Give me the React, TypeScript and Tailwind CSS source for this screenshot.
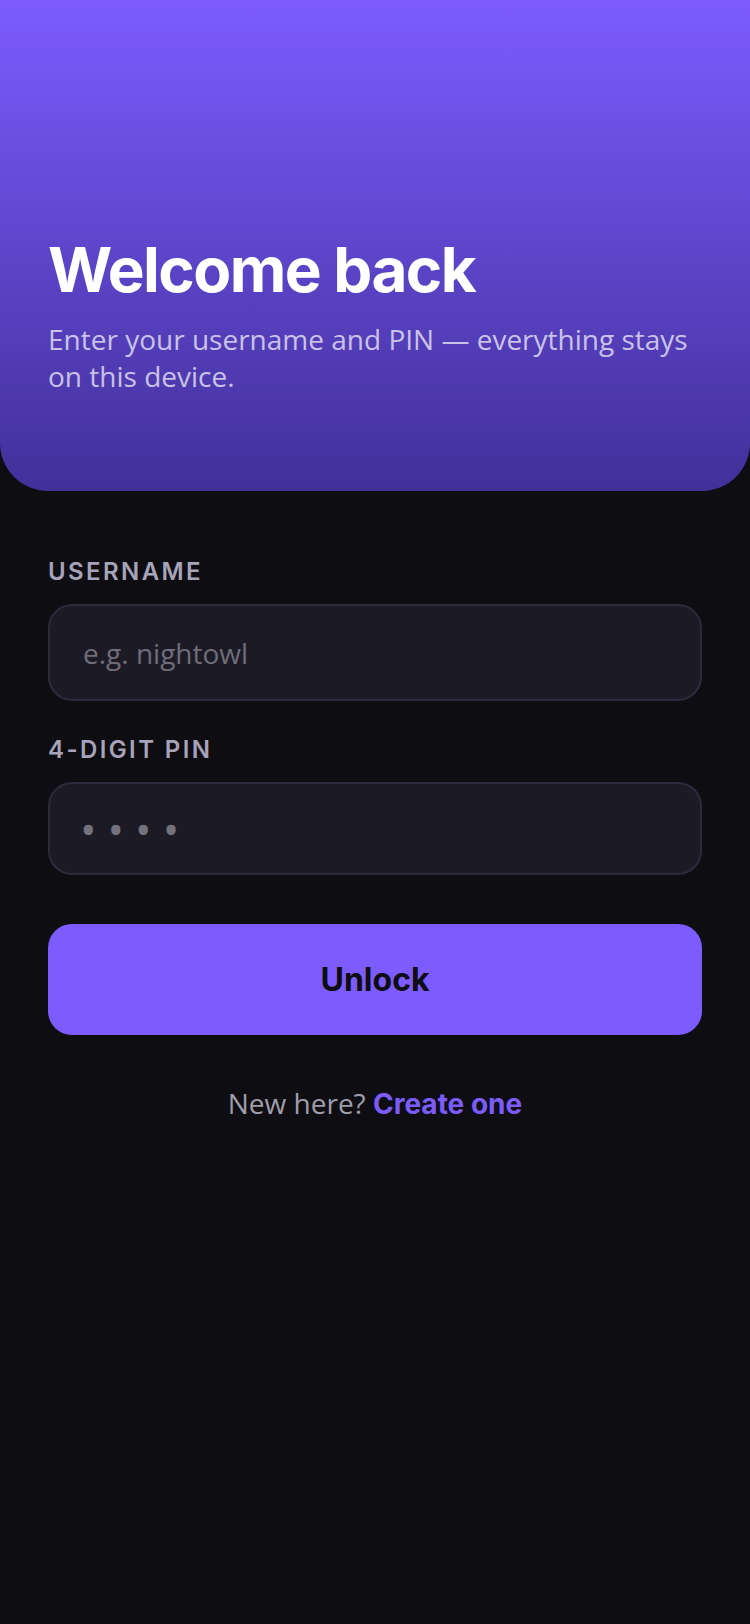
import { useState } from "react";

const sans = "font-['Inter','Noto_Sans',sans-serif]";
const body = "font-['Open_Sans','Noto_Sans',sans-serif]";

function Field({
  label,
  children,
}: {
  label: string;
  children: React.ReactNode;
}) {
  return (
    <label className="flex flex-col gap-[14px]">
      <span className={`${sans} text-[24px] leading-[36px] font-semibold tracking-[0.1em] text-[#a7a3b8] uppercase`}>
        {label}
      </span>
      {children}
    </label>
  );
}

export default function App() {
  const [username, setUsername] = useState("");
  const [pin, setPin] = useState("");

  return (
    <div className="min-h-[1624px] w-full bg-[#0e0d12] flex flex-col">
      <header className="h-[491px] flex flex-col justify-end px-12 pb-[96px] rounded-b-[48px] bg-gradient-to-b from-[#7c5cff] to-[#42309a]">
        <h1 className={`${sans} text-[62px] leading-[1.1] font-bold tracking-tight text-white`}>Welcome back</h1>
        <p className={`${body} mt-[17px] text-[28px] leading-[37px] text-white/70`}>
          Enter your username and PIN — everything stays on this device.
        </p>
      </header>

      <main className="flex flex-col px-12 pt-[63px]">
        <div className="flex flex-col gap-[31px]">
          <Field label="Username">
            <input
              value={username}
              onChange={(e) => setUsername(e.target.value)}
              placeholder="e.g. nightowl"
              className={`${body} h-[97px] w-full rounded-3xl border-2 border-[#2d2a3b] bg-[#1c1a25] px-[33px] text-[28px] text-white placeholder:text-[#6f6d7a] outline-none`}
            />
          </Field>
          <Field label="4-digit PIN">
            <input
              type="password"
              inputMode="numeric"
              maxLength={4}
              value={pin}
              onChange={(e) => setPin(e.target.value)}
              placeholder="••••"
              className={`${body} h-[93px] w-full rounded-3xl border-2 border-[#2d2a3b] bg-[#1c1a25] px-[30px] text-[44px] tracking-[11px] text-white placeholder:text-[#74727c] outline-none`}
            />
          </Field>
        </div>

        <button className={`${sans} mt-[49px] h-[111px] w-full rounded-3xl bg-[#7c5cff] text-[32px] font-bold text-[#0e0d12]`}>
          Unlock
        </button>

        <p className="mt-[48px] text-center text-[28px] leading-[40px]">
          <span className={`${body} text-[#a09dab]`}>New here? </span>
          <a href="#" className={`${sans} font-bold text-[#7c5cff]`}>
            Create one
          </a>
        </p>
      </main>
    </div>
  );
}
